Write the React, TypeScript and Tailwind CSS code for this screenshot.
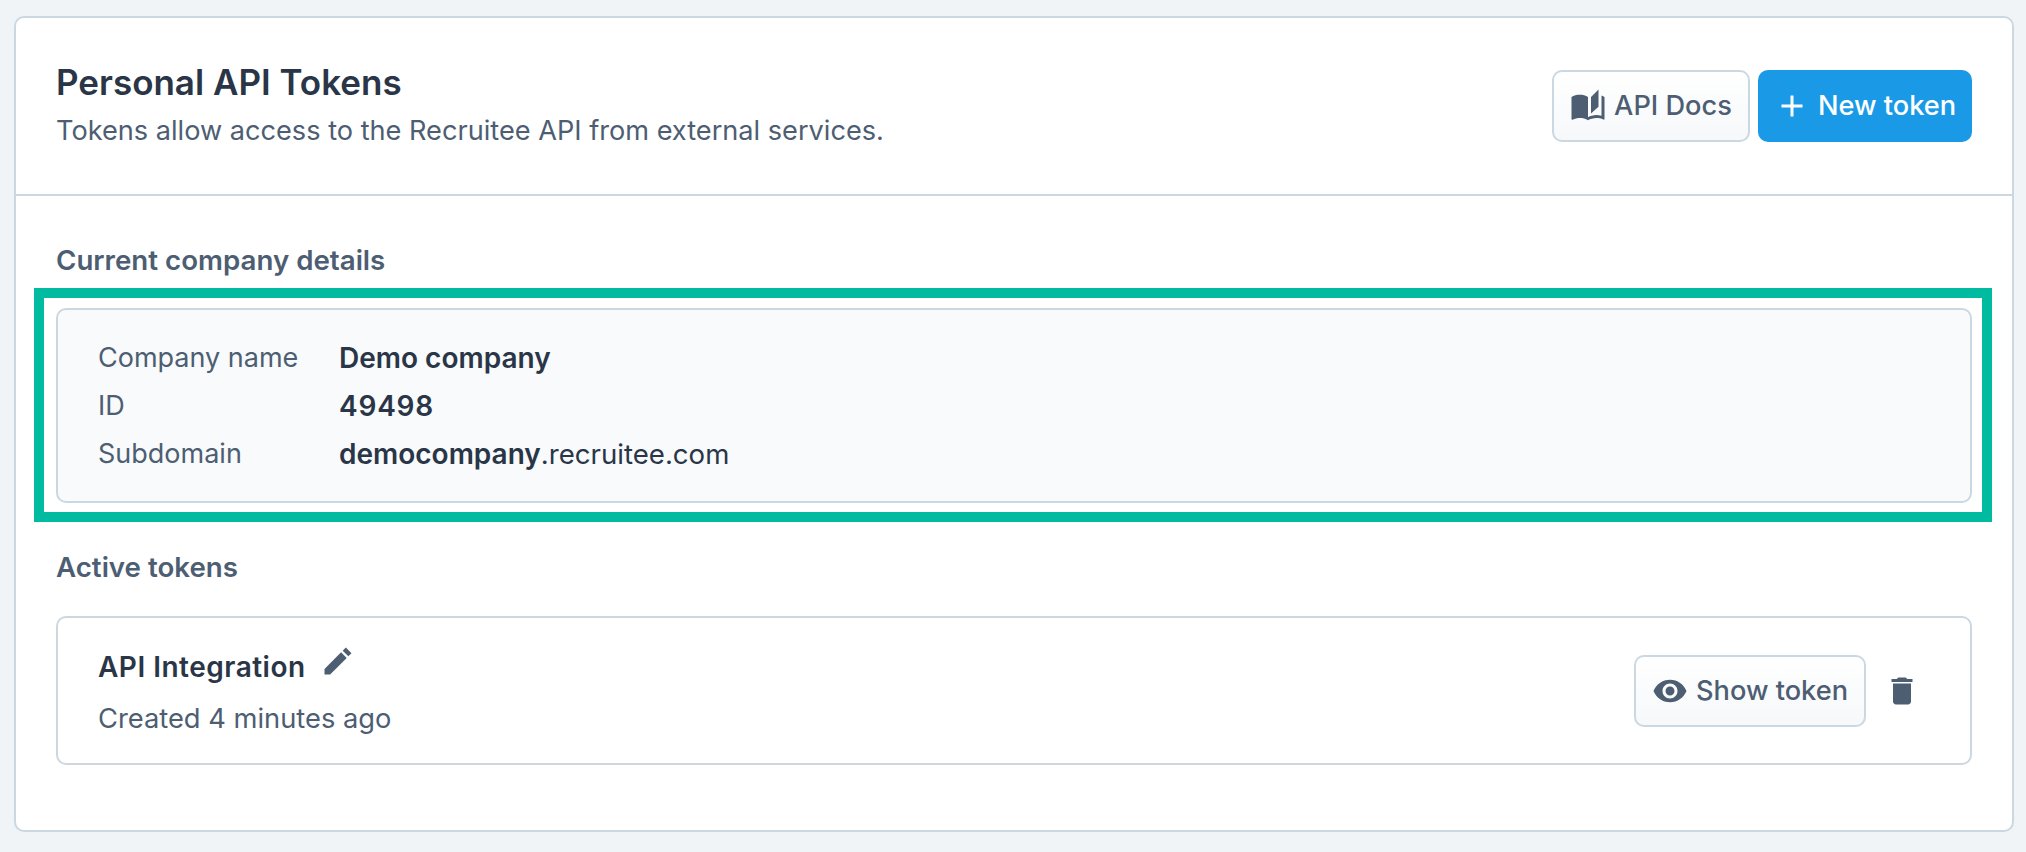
import React from 'react';
import { MdAdd, MdAutoStories, MdDelete, MdVisibility } from 'react-icons/md';

const details = [
  { label: 'Company name', value: <span className="text-[28px] font-semibold">Demo company</span> },
  { label: 'ID', value: <span className="text-[28px] font-semibold tracking-[0.8px]">49498</span> },
  {
    label: 'Subdomain',
    value: (
      <>
        <span className="text-[28px] font-semibold">democompany</span>
        <span className="text-[27.6px]">.recruitee.com</span>
      </>
    ),
  },
];

const PencilIcon = () => (
  <svg viewBox="0 0 24 24" width="36" height="36" fill="currentColor" className="-mt-[12px] text-[#4d5e73]">
    <path d="M3 17.25V21h3.75L17.81 9.94l-3.75-3.75L3 17.25z" />
    <path d="M15.13 5.12l3.75 3.75L21 6.75 17.25 3l-2.12 2.12z" />
  </svg>
);

const App: React.FC = () => {
  return (
    <div className="min-h-screen bg-[#f0f4f7] pl-[14px] pr-[12px] pt-[16px] pb-[20px] font-['Inter',sans-serif] text-[#2a3647]">
      <div className="h-[816px] rounded-[10px] border-2 border-[#ccd8e1] bg-white">
        <div className="flex h-[178px] items-center justify-between border-b-2 border-[#ccd8e1] pl-[40px] pr-[40px]">
          <div className="-mt-[4px]">
            <h1 className="text-[35px] leading-[48px] font-semibold">Personal API Tokens</h1>
            <p className="mt-[5px] text-[27.15px] leading-[40px] text-[#4d5e73]">
              Tokens allow access to the Recruitee API from external services.
            </p>
          </div>
          <div className="-mt-[1px] flex gap-[8px]">
            <button className="flex h-[72px] w-[198px] items-center justify-center gap-[8px] rounded-[10px] border-2 border-[#ccd8e1] bg-gradient-to-b from-white to-[#f6f8fa] text-[27.2px] font-medium text-[#4d5e73]">
              <MdAutoStories size={36} />
              <span className="mt-[2px]">API Docs</span>
            </button>
            <button className="flex h-[72px] w-[214px] items-center justify-center gap-[8px] rounded-[10px] bg-[#1a9ae6] text-[27.2px] font-medium text-white">
              <MdAdd size={36} />
              <span className="mt-[2px]">New token</span>
            </button>
          </div>
        </div>

        <div className="px-[40px]">
          <h2 className="mt-[46px] text-[27.7px] leading-[36px] font-semibold text-[#4d5e73]">Current company details</h2>
          <div className="relative mt-[30px] h-[195px] rounded-[10px] border-2 border-[#ccd8e1] bg-[#f8fafb] px-[40px] pt-[24px]">
            <div className="grid grid-cols-[241px_1fr] text-[27px] leading-[48px]">
              {details.map((row) => (
                <React.Fragment key={row.label}>
                  <div className="text-[#4d5e73]">{row.label}</div>
                  <div className="h-[48px]">{row.value}</div>
                </React.Fragment>
              ))}
            </div>
            {/* highlight frame drawn over the screenshot */}
            <div className="pointer-events-none absolute -top-[22px] -right-[22px] -bottom-[21px] -left-[24px] border-10 border-[#00bba0]" />
          </div>

          <h2 className="mt-[46px] text-[27.7px] leading-[36px] font-semibold text-[#4d5e73]">Active tokens</h2>
          <div className="mt-[31px] flex h-[149px] items-center justify-between rounded-[10px] border-2 border-[#ccd8e1] pl-[40px] pr-[50px]">
            <div>
              <div className="flex items-center gap-[14px]">
                <span className="text-[28px] leading-[48px] font-semibold tracking-[0.5px]">API Integration</span>
                <PencilIcon />
              </div>
              <div className="mt-[8px] text-[27.3px] leading-[40px] text-[#4d5e73]">Created 4 minutes ago</div>
            </div>
            <div className="flex items-center gap-[18px]">
              <button className="flex h-[72px] w-[232px] items-center justify-center gap-[8px] rounded-[10px] border-2 border-[#ccd8e1] bg-gradient-to-b from-white to-[#f6f8fa] text-[27.2px] font-medium text-[#4d5e73]">
                <MdVisibility size={36} />
                <span className="mt-[2px]">Show token</span>
              </button>
              <MdDelete size={36} className="text-[#4d5e73]" />
            </div>
          </div>
        </div>
      </div>
    </div>
  );
};

export default App;
